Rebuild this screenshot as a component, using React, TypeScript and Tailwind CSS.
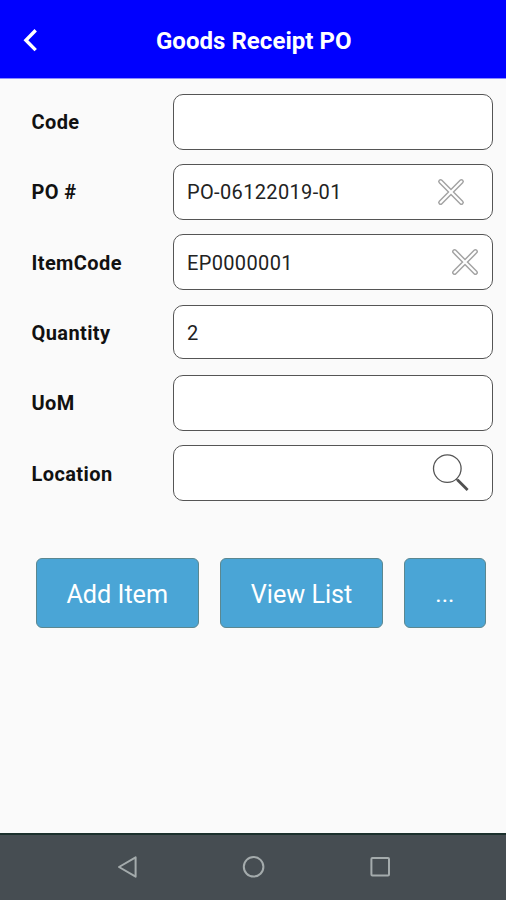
import React from "react";

type Field = {
  label: string;
  value: string;
  icon?: "clear" | "search";
  boxClass: string;
};

const fields: Field[] = [
  { label: "Code", value: "", boxClass: "h-[56px]" },
  { label: "PO #", value: "PO-06122019-01", icon: "clear", boxClass: "h-[56px] pr-[27px]" },
  { label: "ItemCode", value: "EP0000001", icon: "clear", boxClass: "h-[56px] pr-[13px]" },
  { label: "Quantity", value: "2", boxClass: "h-[54px] pt-[2px]" },
  { label: "UoM", value: "", boxClass: "h-[56px]" },
  { label: "Location", value: "", icon: "search", boxClass: "h-[56px] pr-[22px]" },
];

const BackIcon: React.FC = () => (
  <svg width="18" height="26" viewBox="0 0 18 26" fill="none">
    <path d="M15.7 3.3 5.9 13.2l9.8 9.9" stroke="white" strokeWidth="3.4" />
  </svg>
);

const ClearIcon: React.FC = () => (
  <svg width="28" height="28" viewBox="0 0 28 28" fill="none" strokeLinecap="round">
    <path d="M3.6 3.6 24.4 24.4M24.4 3.6 3.6 24.4" stroke="#a3a3a3" strokeWidth="5" />
    <path d="M3.6 3.6 24.4 24.4M24.4 3.6 3.6 24.4" stroke="white" strokeWidth="2.1" />
  </svg>
);

const SearchIcon: React.FC = () => (
  <svg width="38" height="38" viewBox="0 0 38 38" fill="none">
    <circle cx="15.3" cy="14.6" r="13.8" stroke="#555555" strokeWidth="1.3" />
    <path d="m24.1 25 2 1.8" stroke="#555555" strokeWidth="1.5" />
    <path d="m25.4 25.8 10.2 10.2" stroke="#505050" strokeWidth="2.8" />
  </svg>
);

const FieldRow: React.FC<{ field: Field }> = ({ field }) => (
  <div className="flex h-[70.35px] items-start">
    <label className="w-[141px] pt-[14.4px] text-[20px] leading-[28px] font-bold tracking-[0.4px] text-[#111111]">
      {field.label}
    </label>
    <div
      className={`flex w-[320px] items-center justify-between rounded-[10px] border border-[#555555] bg-white pl-[13.5px] ${field.boxClass}`}
    >
      <span className="pt-[0.8px] text-[20px] leading-[28px] tracking-[0.35px] text-[#222222]">
        {field.value}
      </span>
      {field.icon === "clear" && <ClearIcon />}
      {field.icon === "search" && <SearchIcon />}
    </div>
  </div>
);

const buttonClass =
  "flex h-[70px] items-center justify-center rounded-[6px] border border-[#5b8790] bg-[#4aa5d6] pt-[3px] text-white";

const App: React.FC = () => {
  return (
    <div className="flex h-[900px] w-[506px] flex-col bg-[#fafafa] font-['Roboto',sans-serif]">
      <header className="grid h-[79px] shrink-0 grid-cols-[60px_1fr_60px] items-center border-b border-[#8c8cff] bg-[#0000ff]">
        <button className="pt-px pl-[20px]">
          <BackIcon />
        </button>
        <h1 className="pt-[4px] pl-[1.5px] text-center text-[24px] font-bold tracking-[0.04px] text-white">
          Goods Receipt PO
        </h1>
      </header>

      <main className="flex-1">
        <div className="pt-[14.6px] pl-[31.5px]">
          {fields.map((field) => (
            <FieldRow key={field.label} field={field} />
          ))}
        </div>

        <div className="mt-[42.3px] flex pl-[35.5px]">
          <button className={`${buttonClass} w-[163.5px] text-[25.2px]`}>Add Item</button>
          <button className={`${buttonClass} ml-[20.8px] w-[163.5px] text-[25.2px]`}>View List</button>
          <button className={`${buttonClass} ml-[20.8px] w-[81.5px] text-[24px]`}>...</button>
        </div>
      </main>

      <nav className="h-[67px] shrink-0 border-t-2 border-[#1b302d] bg-[#464d52]">
        <svg width="506" height="65" viewBox="0 0 506 65" fill="none" stroke="#a4abac" strokeWidth="2">
          <path d="M135.6 22.3v19.4L119 32Z" strokeLinejoin="round" />
          <circle cx="253.6" cy="31.8" r="9.8" />
          <rect x="371.4" y="23" width="17.6" height="17.4" rx="1" />
        </svg>
      </nav>
    </div>
  );
};

export default App;
